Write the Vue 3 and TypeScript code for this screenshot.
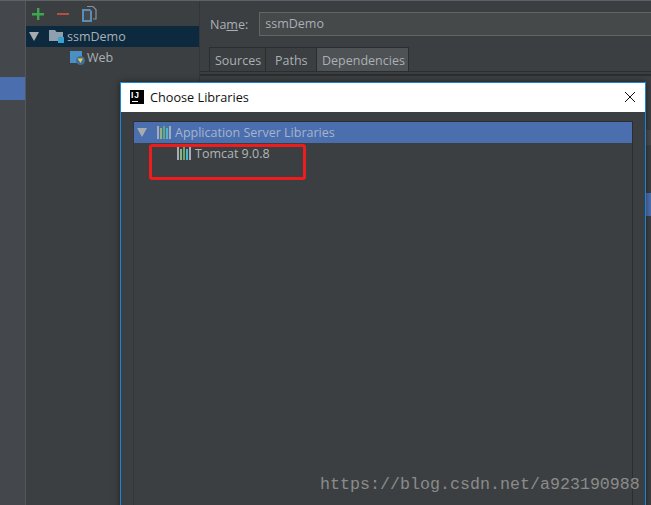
<script setup lang="ts">
const bars = ['#a4adb4', '#8fb08c', '#5fae62', '#4fb0d8', '#a4adb4']
</script>

<template>
  <div class="page">
    <aside class="rail"><div class="rail-sel"></div></aside>
    <section class="modules">
      <div class="toolbar">
        <svg width="16" height="16" viewBox="0 0 16 16"><path d="M7 2h2.400v5H14v2.400H9.400V14H7V9.400H2V7h5z" fill="#3fa650"/></svg>
        <svg class="minus" width="16" height="16" viewBox="0 0 16 16"><rect x="2" y="7" width="12" height="2" fill="#b5503f"/></svg>
        <svg class="copy" width="16" height="18" viewBox="0 0 16 18"><path d="M6 1.500h6l3 3V14h-3" fill="none" stroke="#8a9199" stroke-width="1.200"/><path d="M1 4h8l2 2v11H1z" fill="#5b8cb4"/><rect x="3" y="6" width="6" height="9" fill="#46494b"/></svg>
      </div>
      <div class="tree-row selected">
        <span class="arrow"></span>
        <svg class="folder" width="16" height="15" viewBox="0 0 16 15"><path d="M0 1h6l1.500 2H14v9H0z" fill="#8ea0ad"/><rect x="9" y="8" width="6" height="6" fill="#3aa0d0"/></svg>
        <span>ssmDemo</span>
      </div>
      <div class="tree-row child">
        <svg width="16" height="16" viewBox="0 0 16 16"><rect x="0" y="1" width="12" height="12" fill="#4b8fc4"/><circle cx="10.500" cy="10.500" r="4.500" fill="#3d6f98"/><path d="M7.500 8.500h5.500l-2.500 4.500z" fill="#e6c74c"/></svg>
        <span>Web</span>
      </div>
    </section>
    <main class="detail">
      <div class="name-row">
        <label>Na<u>m</u>e:</label>
        <div class="name-input">ssmDemo</div>
      </div>
      <div class="tabs">
        <div class="tab sources">Sources</div>
        <div class="tab paths">Paths</div>
        <div class="tab deps">Dependencies</div>
      </div>
      <div class="right-stripes">
        <div class="stripe"></div>
        <div class="stripe-sel"></div>
      </div>
    </main>

    <div class="dialog">
      <header class="title">
        <span class="ij"><span>IJ</span><i></i></span>
        <span class="title-text">Choose Libraries</span>
        <svg class="close" width="12" height="12" viewBox="0 0 12 12"><path d="M1 1l10 10M11 1L1 11" stroke="#111" stroke-width="1"/></svg>
      </header>
      <div class="body">
        <div class="lib-tree">
          <div class="lib-row group">
            <span class="arrow"></span>
            <span class="bars"><i v-for="(c, i) in bars" :key="i" :style="{ background: c }"></i></span>
            <span>Application Server Libraries</span>
          </div>
          <div class="lib-row item">
            <span class="bars"><i v-for="(c, i) in bars" :key="i" :style="{ background: c }"></i></span>
            <span>Tomcat 9.0.8</span>
          </div>
        </div>
      </div>
      <div class="highlight"></div>
    </div>

    <div class="watermark">https://blog.csdn.net/a923190988</div>
  </div>
</template>

<style>
html, body { margin: 0; background: #3c3f41; }
</style>

<style scoped>
.page {
  position: relative;
  width: 651px;
  height: 505px;
  overflow: hidden;
  display: flex;
  background: #3c3f41;
  font-family: "Open Sans", "Noto Sans", sans-serif;
  font-size: 12.500px;
  color: #a9b0b6;
  border-top: 1px solid #5f6265;
  box-sizing: border-box;
}
.rail {
  width: 25px;
  flex: none;
  background: #44474b;
  border-right: 1px solid #55585b;
  padding-top: 76px;
}
.rail-sel { height: 23px; background: #4b6eaf; }
.modules {
  width: 173px;
  flex: none;
  border-right: 1px solid #333638;
}
.toolbar {
  height: 25px;
  display: flex;
  align-items: center;
  padding-left: 4px;
  gap: 9px;
}
.copy { margin-left: 1px; }
.tree-row {
  height: 21px;
  display: flex;
  align-items: center;
  gap: 2px;
}
.selected {
  background: #0d293e;
  padding-left: 3px;
}
.selected .arrow { margin-right: 8px; }
.child { padding-left: 44px; gap: 1px; }
.arrow {
  width: 0;
  height: 0;
  border-left: 5px solid transparent;
  border-right: 5px solid transparent;
  border-top: 9px solid #a6abaf;
}
.detail {
  flex: 1;
  min-width: 0;
  position: relative;
}
.name-row {
  display: flex;
  align-items: center;
  gap: 11px;
  padding: 11px 0 0 10px;
}
.name-input {
  flex: 1;
  height: 22px;
  line-height: 22px;
  padding-left: 5px;
  background: #45494a;
  border: 1px solid #646464;
  border-right: none;
}
.tabs {
  display: flex;
  padding-left: 9px;
  margin-top: 11px;
  height: 24px;
  border-bottom: 1px solid #2b2d2f;
}
.tab {
  line-height: 25px;
  border: 1px solid #2b2d2f;
  border-bottom: none;
  margin-right: -1px;
  box-sizing: border-box;
}
.sources { width: 57px; padding-left: 5px; }
.paths { width: 52px; padding-left: 9px; }
.deps { width: 93px; padding-left: 5px; background: #4e5254; }
.right-stripes {
  border-top: 2px solid #2b2d2f;
  margin-top: 2px;
  padding-top: 54px;
}
.stripe {
  margin-left: auto;
  width: 5px;
  height: 15px;
  background: #47494c;
}
.stripe-sel {
  margin: 48px 0 0 auto;
  width: 5px;
  height: 23px;
  background: #4b6eaf;
}
.dialog {
  position: absolute;
  left: 120px;
  top: 81px;
  width: 526px;
  height: 430px;
  box-sizing: border-box;
  border: 1px solid #1a86d9;
  background: #3c3f41;
  box-shadow: 0 0 6px rgba(0, 0, 0, 0.5);
}
.title {
  height: 29px;
  background: #fff;
  display: flex;
  align-items: center;
  padding: 0 0 1px 9px;
  box-sizing: border-box;
  color: #111;
}
.ij {
  width: 14px;
  height: 14px;
  background: #000;
  color: #fff;
  font: bold 8.500px/10px "Liberation Sans", sans-serif;
  letter-spacing: 1px;
  padding-left: 1px;
  box-sizing: border-box;
  text-align: left;
  position: relative;
  margin-right: 6px;
}
.ij i {
  position: absolute;
  left: 2px;
  bottom: 2px;
  width: 6px;
  height: 1px;
  background: #fff;
}
.title-text { flex: 1; font-size: 12.700px; }
.close { margin-right: 9px; }
.body { padding: 9px 12px 0; }
.lib-tree {
  height: 420px;
  border: 1px solid #2b2d2f;
  border-left-color: #33363a;
}
.lib-row {
  height: 21px;
  display: flex;
  align-items: center;
  padding-bottom: 1px;
  box-sizing: border-box;
}
.group {
  background: #4b6eaf;
  color: #a6b4cc;
  padding-left: 3px;
}
.group .arrow { margin-right: 10px; }
.bars { margin-right: 4px; }
.item {
  padding-left: 43px;
  color: #b0b5b9;
}
.bars {
  display: inline-flex;
  align-items: flex-end;
  gap: 1px;
  height: 13px;
}
.bars i {
  width: 2px;
  height: 13px;
}
.bars i:nth-child(2n) { height: 11px; }
.highlight {
  position: absolute;
  left: 28px;
  top: 61px;
  width: 157px;
  height: 36px;
  box-sizing: border-box;
  border: 3px solid #ee1d1d;
  border-radius: 3px;
}
.watermark {
  position: absolute;
  left: 320px;
  top: 474px;
  font-family: "Liberation Mono", monospace;
  font-size: 16.670px;
  color: #8a8b8a;
  white-space: nowrap;
}
</style>
